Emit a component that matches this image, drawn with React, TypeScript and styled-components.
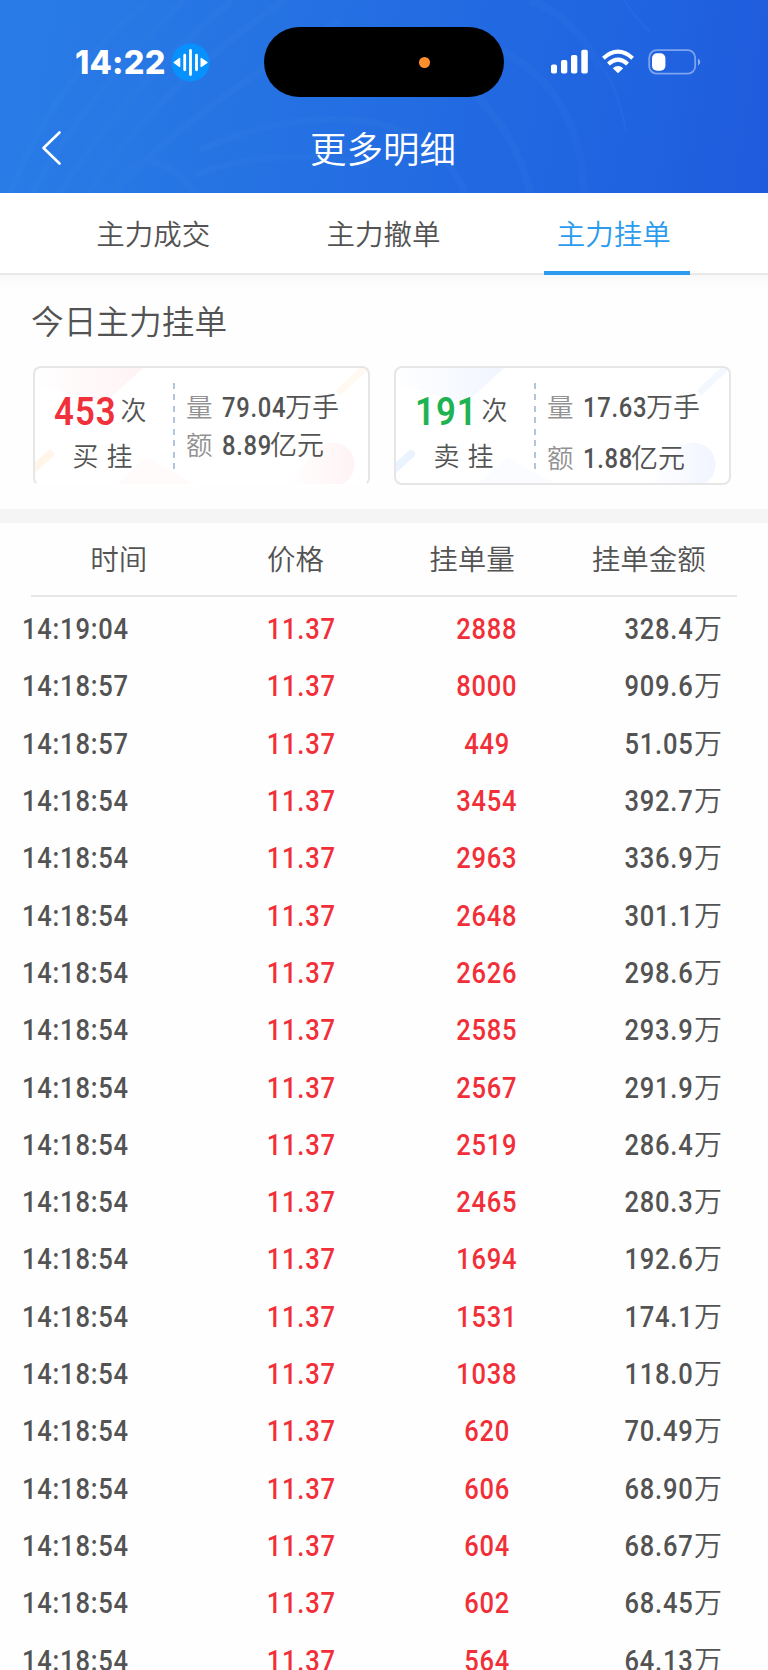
import React from "react";
import styled, { createGlobalStyle } from "styled-components";

const cjk = `"Noto Sans CJK SC", sans-serif`;

const GlobalStyle = createGlobalStyle`
  html, body { margin: 0; padding: 0; background: #fefefe; }
  *, *::before, *::after { box-sizing: border-box; }
  body { font-family: ${cjk}; font-weight: 350; color: #535353; overflow: hidden; }
`;

const Screen = styled.div`
  width: 768px;
  height: 1670px;
  overflow: hidden;
  background: #fefefe;
`;

const Header = styled.header`
  position: relative;
  height: 193px;
  overflow: hidden;
  background: linear-gradient(100deg, #297ce7 0%, #2674e4 30%, #226ae1 60%, #2062e0 85%, #1f5bdd 100%);
`;

const HeaderArt = styled.svg`
  position: absolute;
  inset: 0;
`;

const StatusBar = styled.div`
  display: flex;
  align-items: center;
  height: 70px;
`;

const HeaderInner = styled.div`
  position: relative;
  padding-top: 27px;
`;

const Clock = styled.time`
  margin-left: 75px;
  width: 96px;
  padding-top: 2px;
  font: 800 32.5px/38px Inter, sans-serif;
  letter-spacing: 0.2px;
  color: #fff;
`;

const Island = styled.div`
  display: flex;
  align-items: center;
  width: 240px;
  height: 70px;
  margin-left: 54px;
  padding-left: 155px;
  border-radius: 35px;
  background: #000;
`;

const RecordingDot = styled.i`
  width: 11px;
  height: 11px;
  border-radius: 50%;
  background: #ff8f2c;
`;

const SignalSet = styled.svg`
  margin-left: 46px;
`;

const TitleBar = styled.div`
  display: grid;
  grid-template-columns: 100px 1fr 102px;
  align-items: center;
  height: 60px;
  margin-top: 21px;
`;

const BackIcon = styled.svg`
  margin-left: 38.5px;
`;

const Title = styled.h1`
  margin: 0;
  text-align: center;
  font-size: 36.5px;
  line-height: 58px;
  font-weight: 350;
  color: #fff;
`;

const Tabs = styled.nav`
  display: grid;
  grid-template-columns: repeat(3, 230.3px);
  height: 82px;
  padding-left: 38px;
  border-bottom: 2px solid #e9e9e9;
  background: #fff;
`;

const Tab = styled.a<{ $active?: boolean }>`
  position: relative;
  height: 82px;
  text-align: center;
  font-size: 28.5px;
  line-height: 80px;
  color: ${(p) => (p.$active ? "#2a9bee" : "#535353")};
`;

const ActiveBar = styled.i`
  position: absolute;
  left: 45.5px;
  bottom: 0;
  width: 145.5px;
  height: 4px;
  background: #2a9bee;
`;

const Summary = styled.section`
  height: 234px;
  padding: 21px 37px 0 33px;
  background: linear-gradient(#f8f8f8, #fefefe 14px);
`;

const SummaryTitle = styled.h2`
  margin: 0 0 0 -2px;
  font-size: 32.7px;
  line-height: 48px;
  font-weight: 350;
`;

const Cards = styled.div`
  display: flex;
  justify-content: space-between;
  margin-top: 22px;
`;

const Card = styled.article<{ $open?: boolean }>`
  position: relative;
  display: flex;
  width: 337px;
  height: ${(p) => (p.$open ? 120 : 119)}px;
  overflow: hidden;
  border: 2px solid #e6e6e6;
  border-bottom-color: ${(p) => (p.$open ? "transparent" : "#e6e6e6")};
  border-radius: 8px;
  background: #fff;
`;

const CardArt = styled.svg`
  position: absolute;
  left: -2px;
  top: -2px;
`;

const CountSide = styled.div`
  position: relative;
  width: 138px;
  padding-top: 22px;
`;

const CountLine = styled.div`
  display: flex;
  align-items: baseline;
  height: 43px;
  padding-left: 19px;
  font-size: 26px;
  line-height: 43px;
`;

const Count = styled.b<{ $color: string }>`
  width: 66.5px;
  font: 600 39.5px/43px Roboto, sans-serif;
  letter-spacing: 1.2px;
  transform: scaleX(0.88);
  transform-origin: left;
  color: ${(p) => p.$color};
`;

const Unit = styled.span`
  position: relative;
  top: -5px;
`;

const CountLabel = styled.div`
  padding-right: 3px;
  text-align: center;
  font-size: 26px;
  line-height: 43px;
  word-spacing: 2px;
`;

const Divider = styled.div`
  position: relative;
  width: 2px;
  height: 87px;
  margin-top: 15px;
  background: repeating-linear-gradient(#b3c5db 0 6px, transparent 6px 11.45px);
`;

const Metrics = styled.div<{ $gap: number }>`
  position: relative;
  display: flex;
  flex-direction: column;
  gap: ${(p) => p.$gap}px;
  padding: 21px 0 0 11px;
`;

const Metric = styled.div`
  display: flex;
  height: 38px;
  font: 350 27px/38px Roboto, ${cjk};
  white-space: nowrap;
`;

const MetricName = styled.span`
  width: 36px;
  font-family: ${cjk};
  font-size: 26.5px;
  line-height: 34px;
  color: #929292;
`;

const Digits = styled.span<{ $wide?: boolean }>`
  width: ${(p) => (p.$wide ? 63 : 48)}px;
  font-weight: 500;
  letter-spacing: 0.8px;
  transform: scaleX(0.88);
  transform-origin: left;
`;

const Strip = styled.div`
  height: 14px;
  background: #f5f5f5;
`;

const TableHead = styled.div`
  display: grid;
  grid-template-columns: repeat(4, 1fr);
  height: 74px;
  margin: 0 31px 0 30.5px;
  border-bottom: 2px solid #e8e8e8;
  text-align: center;
  font-size: 28.5px;
  line-height: 70px;
`;

const Rows = styled.div`
  padding: 4px 0 0 22px;
`;

const Row = styled.div`
  display: grid;
  grid-template-columns: 186px 186px 186px 142px;
  height: 57.32px;
  font: 500 29px/57px Roboto, ${cjk};
`;

const Cell = styled.span<{ $kind?: "price" | "volume" }>`
  text-align: ${(p) => (p.$kind ? "center" : "left")};
  color: ${(p) => (p.$kind ? "#f22f38" : "#535353")};
`;

const Narrow = styled.span<{ $center?: boolean }>`
  display: inline-block;
  letter-spacing: 0.9px;
  transform: scaleX(0.88);
  transform-origin: ${(p) => (p.$center ? "center" : "left")};
`;

const Amount = styled.span`
  display: flex;
  justify-content: flex-end;
  line-height: 56px;
  font-weight: 350;
`;

const AmountDigits = styled.span`
  font-weight: 500;
  letter-spacing: 0.9px;
  transform: scaleX(0.88);
  transform-origin: right;
`;

const AmountUnit = styled.span`
  font-size: 28px;
  line-height: 57px;
`;

const rows: [string, string, string][] = [
  ["14:19:04", "2888", "328.4"],
  ["14:18:57", "8000", "909.6"],
  ["14:18:57", "449", "51.05"],
  ["14:18:54", "3454", "392.7"],
  ["14:18:54", "2963", "336.9"],
  ["14:18:54", "2648", "301.1"],
  ["14:18:54", "2626", "298.6"],
  ["14:18:54", "2585", "293.9"],
  ["14:18:54", "2567", "291.9"],
  ["14:18:54", "2519", "286.4"],
  ["14:18:54", "2465", "280.3"],
  ["14:18:54", "1694", "192.6"],
  ["14:18:54", "1531", "174.1"],
  ["14:18:54", "1038", "118.0"],
  ["14:18:54", "620", "70.49"],
  ["14:18:54", "606", "68.90"],
  ["14:18:54", "604", "68.67"],
  ["14:18:54", "602", "68.45"],
  ["14:18:54", "564", "64.13"],
];

function Waves() {
  return (
    <HeaderArt width="768" height="193" fill="none" stroke="#4b95ee">
      <g strokeWidth="7" opacity="0.08">
        <path d="M10 193Q60 70 150 0" />
        <path d="M32 193Q90 90 184 0" />
        <path d="M60 193Q120 95 232 0" />
        <path d="M88 193Q160 85 285 0" />
        <path d="M112 193Q190 110 340 20" />
        <path d="M112 193Q145 130 195 193" />
        <path d="M200 150Q290 110 370 122Q440 135 465 193" />
        <path d="M195 175Q270 145 370 165" />
      </g>
      <g strokeWidth="8" opacity="0.07">
        <path d="M470 90Q515 130 530 193" />
        <path d="M530 0Q580 20 600 70" />
        <path d="M500 50Q580 90 584 193" />
      </g>
      <path d="M624 0Q636 20 650 32M604 70Q620 95 626 132" strokeWidth="2" opacity="0.12" />
    </HeaderArt>
  );
}

function VoiceIcon() {
  return (
    <svg width="39" height="39" viewBox="0 0 39 39">
      <circle cx="19.5" cy="19.5" r="19" fill="#0791ff" />
      <path d="M13.7 12.2v14.6M19.5 7.5v24M25.5 12.2v14.6" stroke="#fff" strokeWidth="2.8" strokeLinecap="round" />
      <path d="M3.2 19.5 8.6 15.6V23.4ZM36 19.5 30.2 15.6V23.4Z" fill="#fff" stroke="#fff" strokeWidth="1.4" strokeLinejoin="round" />
    </svg>
  );
}

function Signals() {
  return (
    <SignalSet width="152" height="26" viewBox="0 0 152 26">
      <g fill="#fff">
        <rect x="1" y="15.5" width="6" height="9" rx="1.8" />
        <rect x="11" y="11" width="6.3" height="13.5" rx="1.8" />
        <rect x="21" y="6" width="6.3" height="18.5" rx="1.8" />
        <rect x="31.3" y="0.8" width="6.5" height="23.7" rx="1.8" />
        <path d="M68 24.2 62.8 19.3Q68 14.8 73.2 19.3Z" />
      </g>
      <g fill="none" stroke="#fff" strokeWidth="4.1">
        <path d="M53.4 9.2Q68-3.8 82.6 9.2" />
        <path d="M58.4 14.9Q68 6.2 77.6 14.9" />
      </g>
      <rect x="99.2" y="1.2" width="46" height="23.5" rx="7.5" fill="none" stroke="#fff" strokeOpacity="0.42" strokeWidth="1.8" />
      <rect x="102" y="4.2" width="13.4" height="17.6" rx="5" fill="#fff" />
      <path d="M148 9.4Q150 10.5 150.3 13Q150 15.5 148 16.6Z" fill="#fff" fillOpacity="0.5" />
    </SignalSet>
  );
}

function CardBackdrop({ id, tint, accent }: { id: string; tint: string; accent: string }) {
  return (
    <CardArt width="337" height="120">
      <defs>
        <linearGradient id={id} x1="0" y1="0" x2="1" y2="0">
          <stop offset="0" stopColor={tint} stopOpacity="0" />
          <stop offset="1" stopColor={tint} />
        </linearGradient>
      </defs>
      <path d="M0 2H110L72 37Q35 27 0 18Z" fill={`url(#${id})`} />
      <path d="M82 120 113 91 165 120Z" fill={tint} opacity="0.35" />
      <path d="M252 120 283 84A22 22 0 1 1 295 120Z" fill={`url(#${id})`} />
      <path d="M-4 107 17 88" stroke={accent} strokeWidth="8" strokeLinecap="round" />
      <path d="M305 27 336-2" stroke={accent} strokeWidth="7" opacity="0.6" />
    </CardArt>
  );
}

interface SummaryCardProps {
  id: string;
  count: string;
  color: string;
  label: string;
  volume: string;
  money: string;
  gap: number;
  open?: boolean;
  tint: string;
  accent: string;
}

function SummaryCard(p: SummaryCardProps) {
  return (
    <Card $open={p.open}>
      <CardBackdrop id={p.id} tint={p.tint} accent={p.accent} />
      <CountSide>
        <CountLine>
          <Count $color={p.color}>{p.count}</Count>
          <Unit>次</Unit>
        </CountLine>
        <CountLabel>{p.label}</CountLabel>
      </CountSide>
      <Divider />
      <Metrics $gap={p.gap}>
        <Metric>
          <MetricName>量</MetricName>
          <Digits $wide>{p.volume}</Digits>万手
        </Metric>
        <Metric>
          <MetricName>额</MetricName>
          <Digits>{p.money}</Digits>亿元
        </Metric>
      </Metrics>
    </Card>
  );
}

export default function App() {
  return (
    <Screen>
      <GlobalStyle />
      <Header>
        <Waves />
        <HeaderInner>
          <StatusBar>
            <Clock>14:22</Clock>
            <VoiceIcon />
            <Island>
              <RecordingDot />
            </Island>
            <Signals />
          </StatusBar>
          <TitleBar>
            <BackIcon width="24" height="36" viewBox="0 0 24 36">
              <path d="M20.5 2.5 4.5 18 20.5 33.5" fill="none" stroke="#fff" strokeWidth="2.6" strokeLinecap="round" strokeLinejoin="round" />
            </BackIcon>
            <Title>更多明细</Title>
          </TitleBar>
        </HeaderInner>
      </Header>
      <Tabs>
        <Tab>主力成交</Tab>
        <Tab>主力撤单</Tab>
        <Tab $active>
          主力挂单
          <ActiveBar />
        </Tab>
      </Tabs>
      <Summary>
        <SummaryTitle>今日主力挂单</SummaryTitle>
        <Cards>
          <SummaryCard id="buy" open count="453" color="#f0303a" label="买 挂" volume="79.04" money="8.89" gap={0} tint="#fff3f4" accent="#fff5e9" />
          <SummaryCard id="sell" count="191" color="#1db352" label="卖 挂" volume="17.63" money="1.88" gap={13} tint="#f1f5ff" accent="#ebf3ff" />
        </Cards>
      </Summary>
      <Strip />
      <TableHead>
        <span>时间</span>
        <span>价格</span>
        <span>挂单量</span>
        <span>挂单金额</span>
      </TableHead>
      <Rows>
        {rows.map(([time, volume, amount], i) => (
          <Row key={i}>
            <Cell>
              <Narrow>{time}</Narrow>
            </Cell>
            <Cell $kind="price">
              <Narrow $center>11.37</Narrow>
            </Cell>
            <Cell $kind="volume">
              <Narrow $center>{volume}</Narrow>
            </Cell>
            <Amount>
              <AmountDigits>{amount}</AmountDigits>
              <AmountUnit>万</AmountUnit>
            </Amount>
          </Row>
        ))}
      </Rows>
    </Screen>
  );
}
